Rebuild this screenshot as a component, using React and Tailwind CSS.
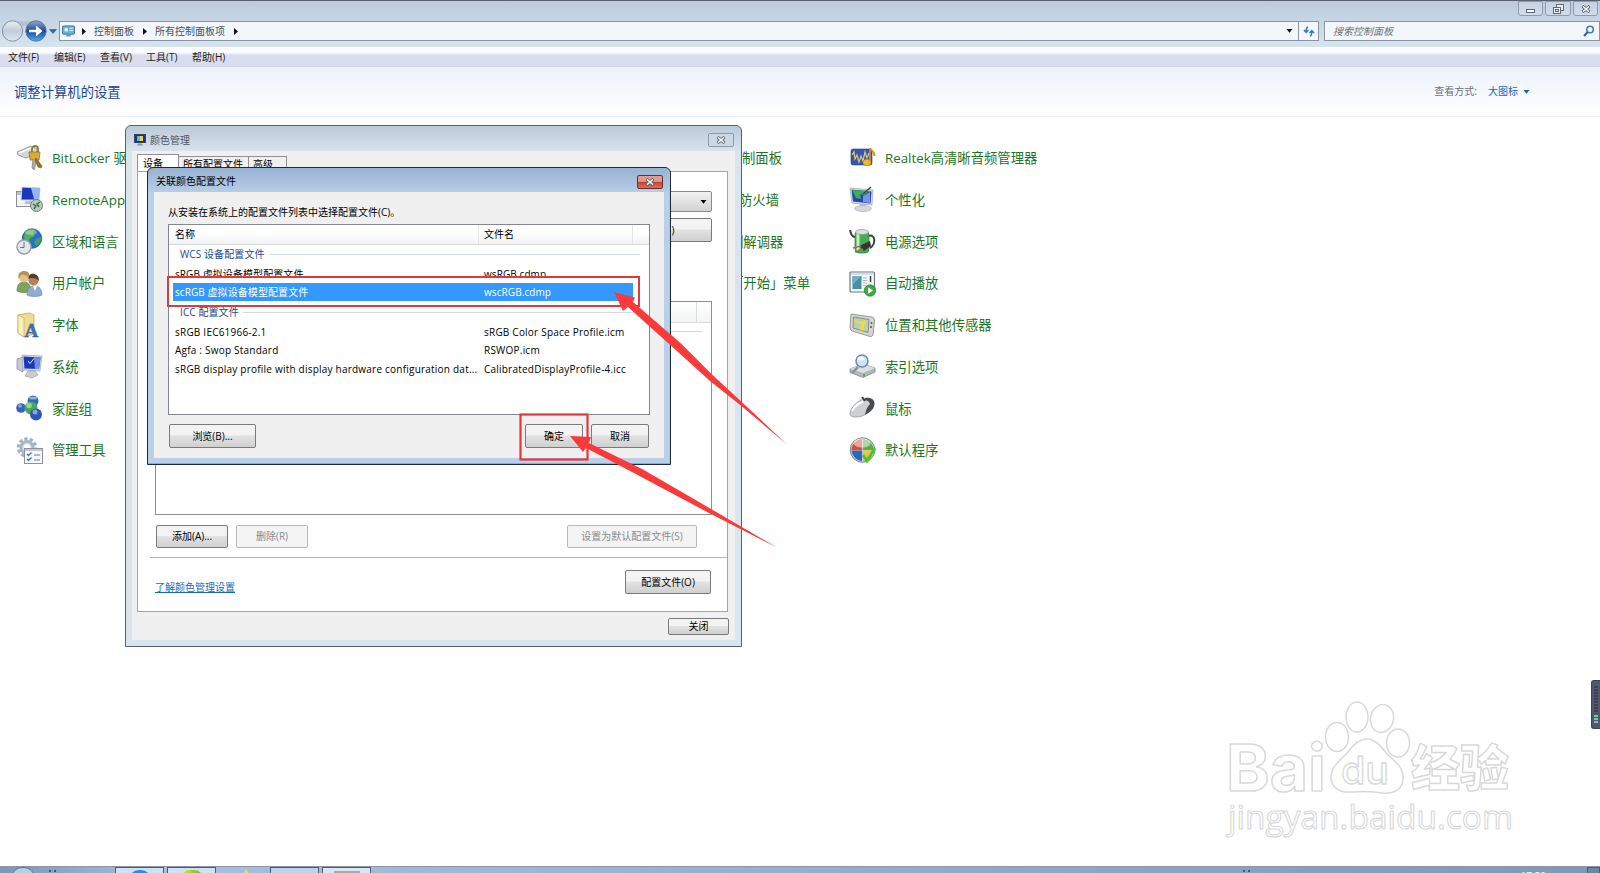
const MENUS = ["文件(F)", "编辑(E)", "查看(V)", "工具(T)", "帮助(H)"];

const LEFT_ITEMS = [
  { label: "BitLocker 驱动器加密", icon: BitLockerIcon },
  { label: "RemoteApp 和桌面连接", icon: RemoteIcon },
  { label: "区域和语言", icon: RegionIcon },
  { label: "用户帐户", icon: UsersIcon },
  { label: "字体", icon: FontsIcon },
  { label: "系统", icon: SystemIcon },
  { label: "家庭组", icon: HomegroupIcon },
  { label: "管理工具", icon: ToolsIcon },
];

const MIDDLE_ITEMS = [
  { label: "制面板", pad: "pl-[6px]" },
  { label: "防火墙", pad: "pl-[3px]" },
  { label: "制解调器", pad: "-ml-[6px]" },
  { label: "「开始」菜单", pad: "-ml-[6px]" },
];

const RIGHT_ITEMS = [
  { label: "Realtek高清晰音频管理器", icon: RealtekIcon },
  { label: "个性化", icon: PersonalizeIcon },
  { label: "电源选项", icon: PowerIcon },
  { label: "自动播放", icon: AutoplayIcon },
  { label: "位置和其他传感器", icon: SensorIcon },
  { label: "索引选项", icon: IndexIcon },
  { label: "鼠标", icon: MouseIcon },
  { label: "默认程序", icon: DefaultsIcon },
];

const ICC_ROWS = [
  ["sRGB IEC61966-2.1", "sRGB Color Space Profile.icm"],
  ["Agfa : Swop Standard", "RSWOP.icm"],
  ["sRGB display profile with display hardware configuration dat...", "CalibratedDisplayProfile-4.icc"],
];

function Icon({ children }) {
  return (
    <svg width="27" height="27" viewBox="0 0 27 27" className="shrink-0">
      {children}
    </svg>
  );
}

function BitLockerIcon() {
  return (
    <Icon>
      <path d="M1 8 L15 2 L21 5 L20 10 L10 14 L2 11Z" fill="#d3d6da" stroke="#888c92" strokeWidth=".8" />
      <path d="M3 9 L15 4 L18 6" fill="none" stroke="#fff" strokeWidth="1.4" />
      <path d="M16 9 V5 a3 3 0 0 1 6 0 V9" fill="none" stroke="#8d7a33" strokeWidth="1.8" />
      <path d="M13 8 h11 l-1 8 h-9Z" fill="#d9ab38" stroke="#9a7418" strokeWidth=".8" />
      <path d="M17 15 l-1 9 l2 2 l1 -3 l1 -8" fill="#aeb1b4" stroke="#777" strokeWidth=".7" />
      <path d="M20 14 l6 8 l-1 2 l-3 -1 l-3 -7Z" fill="#96731f" stroke="#6e5414" strokeWidth=".6" />
    </Icon>
  );
}

function RemoteIcon() {
  return (
    <Icon>
      <rect x=".5" y="5.5" width="14" height="15" fill="#f3f4f6" stroke="#8b9097" />
      <path d="M1 6h13v3H1z" fill="#b8c2d2" />
      <path d="M6 1 L24 2 L23 14 L5 14Z" fill="#1b35bd" stroke="#c7d3e8" />
      <path d="M15 2 L24 2 L23 13 L18 13Z" fill="#94b5f0" />
      <path d="M10 15h8l3 3H8z" fill="#bcc3cc" />
      <circle cx="20.500" cy="19.500" r="6" fill="#bdc5bf" stroke="#79817c" />
      <path d="M17 18l3 2-2 3M24 16l-3 2 2 3" fill="none" stroke="#2c7a39" strokeWidth="1.4" />
    </Icon>
  );
}

function RegionIcon() {
  return (
    <Icon>
      <circle cx="16" cy="10.500" r="9.800" fill="#2872c4" stroke="#194c8c" strokeWidth=".6" />
      <path d="M9 5c3-4 8-5 11-3l-3 3 2 3-5 2-2 5c-3-2-5-6-3-10z" fill="#58b14f" />
      <path d="M20 11l5-2c0 5-2 8-5 9l-2-4z" fill="#46a058" />
      <ellipse cx="15" cy="4.500" rx="6" ry="2.500" fill="#fff" opacity=".35" />
      <circle cx="8" cy="19" r="7" fill="#e4e8ec" stroke="#9aa2ac" strokeWidth="1.500" />
      <path d="M8 14v5.500H4" fill="none" stroke="#6b7480" />
    </Icon>
  );
}

function UsersIcon() {
  return (
    <Icon>
      <path d="M1 21c0-7 3-9 7-9s7 3 7 9c-4 2-10 2-14 0z" fill="#7ba65a" stroke="#557f3b" strokeWidth=".6" />
      <circle cx="8" cy="7.500" r="5" fill="#e3c18f" />
      <path d="M2.500 9c-1-6 2-8 6-8s6 3 4.500 7c-2-3-6-4-8-3z" fill="#b99352" />
      <path d="M11 25c0-7 3-9 7.500-9s7.500 3 7.500 9c-4 2-11 2-15 0z" fill="#8fadd2" stroke="#6683ab" strokeWidth=".6" />
      <path d="M17 16h4l-2 5z" fill="#fff" />
      <circle cx="17.500" cy="10.500" r="5" fill="#b97f57" />
      <path d="M12.500 9c0-5 3-6 6-5s5 3 4 7c-1-3-7-4-10-2z" fill="#523c2c" />
    </Icon>
  );
}

function FontsIcon() {
  return (
    <Icon>
      <path d="M2 3 L13 1 L18 3 V22 L8 25 L2 21Z" fill="#efdc8f" stroke="#c4a74b" strokeWidth=".8" />
      <path d="M2 3 L8 6 V25 L2 21Z" fill="#f8efbd" stroke="#c4a74b" strokeWidth=".6" />
      <text x="8.500" y="25" fontSize="19" className="font-['Liberation_Serif',serif] font-bold" fill="#3f70bd" stroke="#27508f" strokeWidth=".4">A</text>
    </Icon>
  );
}

function SystemIcon() {
  return (
    <Icon>
      <path d="M1 6l6-2v15l-6-3z" fill="#c6cad0" stroke="#858b95" strokeWidth=".7" />
      <path d="M6 2 L26 3 L24 18 L7 17Z" fill="#d2d8e2" stroke="#9aa3b2" strokeWidth=".7" />
      <path d="M7.500 3.500 L24.500 4.500 L23 16 L8.500 15.500Z" fill="#1c38b8" />
      <path d="M18 4 L24.500 4.500 L23 16 L19 16Z" fill="#6d8fe0" />
      <path d="M12 8l2 2.500 4-5" fill="none" stroke="#d7e4fb" strokeWidth="1" />
      <path d="M12 18h7l3 4-6 3-7-2z" fill="#c8cdd4" stroke="#9299a3" strokeWidth=".6" />
    </Icon>
  );
}

function HomegroupIcon() {
  return (
    <Icon>
      <circle cx="5" cy="13" r="4.800" fill="#3763bd" />
      <circle cx="17" cy="6" r="5.500" fill="#3465b8" />
      <circle cx="15" cy="13" r="6.500" fill="#49a856" />
      <circle cx="20" cy="19.500" r="6" fill="#3156b1" />
      <circle cx="13" cy="10.500" r="2.800" fill="#b9e5b2" opacity=".7" />
      <circle cx="19" cy="17" r="2.500" fill="#b3c7f0" opacity=".7" />
      <circle cx="4" cy="11" r="1.800" fill="#b3c7f0" opacity=".7" />
      <ellipse cx="17" cy="3" rx="4" ry="1.500" fill="#b3d3f0" opacity=".7" />
    </Icon>
  );
}

function ToolsIcon() {
  return (
    <Icon>
      <circle cx="11" cy="10.500" r="8.500" fill="none" stroke="#a7b2c1" strokeWidth="3.500" strokeDasharray="3.300 2" />
      <circle cx="11" cy="10.500" r="6" fill="#e3e8ef" stroke="#aab5c4" strokeWidth="3" />
      <circle cx="11" cy="10.500" r="3" fill="#fff" />
      <rect x="8.500" y="11.500" width="18" height="15" fill="#f5f7fa" stroke="#8b929b" />
      <path d="M9 12h17v2H9z" fill="#bec7d3" />
      <path d="M11 17l1.500 1.500 3-3M11 22l1.500 1.500 3-3" fill="none" stroke="#2a8aa3" strokeWidth="1.300" />
      <path d="M18 18h6M18 23h6" stroke="#737b86" />
    </Icon>
  );
}

function RealtekIcon() {
  return (
    <Icon>
      <rect x="2" y="5" width="21" height="16" rx="2" fill="#3554b5" stroke="#26408c" strokeWidth=".6" />
      <path d="M3 11l2-3 1 7 2-4 2 7 2-6 2 5 2-9 2 6 2-5" fill="none" stroke="#e0cc64" strokeWidth="1.200" />
      <path d="M21 18V4c1 3 5 3 4.500 8" fill="none" stroke="#c98f20" strokeWidth="1.800" />
      <ellipse cx="18" cy="18.500" rx="4" ry="3.200" fill="#f2b72c" stroke="#b87c12" strokeWidth=".7" />
    </Icon>
  );
}

function PersonalizeIcon() {
  return (
    <Icon>
      <path d="M1 2 L24 4 L23 19 L3 17Z" fill="#d8dde5" stroke="#98a1ae" strokeWidth=".7" />
      <path d="M2.500 3.500 L22.500 5.500 L21.500 17.500 L4 15.500Z" fill="#2643bd" />
      <path d="M3 4 L20 5 L15 9 L11 8 L12 13 L7 12Z" fill="#41b045" />
      <path d="M14 10 L21 6 V17 L14 16Z" fill="#7994df" />
      <path d="M14 8 L22 1" stroke="#2f4d2c" strokeWidth="1.500" />
      <path d="M11 18h5l1 3h-7z" fill="#b5bbc4" />
      <ellipse cx="14" cy="22.500" rx="8.500" ry="3" fill="#d3d7dc" stroke="#a2a7af" strokeWidth=".6" />
    </Icon>
  );
}

function PowerIcon() {
  return (
    <Icon>
      <path d="M1 2c1 5 3 7 5 7M19 8c8-3 8 9 2 12" fill="none" stroke="#39423d" strokeWidth="2" />
      <rect x="6" y="3" width="14" height="22" rx="4" fill="#46ac54" stroke="#2c7639" strokeWidth=".7" />
      <path d="M9 5v18" stroke="#c5efc1" strokeWidth="3" />
      <ellipse cx="13" cy="4" rx="6.500" ry="2.600" fill="#d9dfdb" stroke="#8f9892" strokeWidth=".7" />
      <path d="M10 18l11-5 1 5-7 5z" fill="#3b3531" />
      <path d="M4 20l8-2M6 24l8-3" stroke="#9a7450" strokeWidth="1.800" />
    </Icon>
  );
}

function AutoplayIcon() {
  return (
    <Icon>
      <rect x="1" y="2" width="24.500" height="20" rx="1" fill="#f6f8fa" stroke="#6d7888" strokeWidth="1.200" />
      <path d="M2 3h23v2H2z" fill="#d6dde7" />
      <rect x="3.500" y="6" width="9" height="13" fill="#4590a2" />
      <path d="M3.500 6h9l-9 9z" fill="#6fafc5" />
      <path d="M14 8h4M14 10.500h4M14 13h4M14 15.500h3" stroke="#b0b7c1" />
      <path d="M21.500 6v6" stroke="#39424e" strokeWidth="1.500" />
      <circle cx="21" cy="20.500" r="5.700" fill="#3ca93c" stroke="#267d27" strokeWidth=".7" />
      <path d="M19.200 17.300 L24 20.500 L19.200 23.700Z" fill="#fff" />
    </Icon>
  );
}

function SensorIcon() {
  return (
    <Icon>
      <path d="M2 2 L23 5 Q26 6 25.500 9 L24 23 Q23 25 21 24.500 L3 19 Q1 18 1 15Z" fill="#d3d5d0" stroke="#848681" strokeWidth=".8" />
      <path d="M4.500 5 L20 7.500 L19 20.500 L4 16Z" fill="#b9ceb5" stroke="#767d72" strokeWidth=".8" />
      <path d="M5 8l6 2 6-2-3 11-4-2 3-5-7-1z" fill="#ecdf38" />
      <circle cx="22.500" cy="11" r="1" fill="#555" />
      <circle cx="22" cy="15" r="1" fill="#555" />
    </Icon>
  );
}

function IndexIcon() {
  return (
    <Icon>
      <path d="M1 16 L14 11 L26 15 V19 L14 24.500 L1 19.500Z" fill="#b2b6ba" stroke="#7c8085" strokeWidth=".7" />
      <path d="M1 16 L14 11 L26 15 L14 20Z" fill="#dde0e3" />
      <path d="M15 21v2.500" stroke="#4bae3f" strokeWidth="1.800" />
      <path d="M9 14 L3 20" stroke="#8d9298" strokeWidth="2.500" />
      <circle cx="13" cy="8" r="6" fill="#cde3f8" stroke="#7388a5" strokeWidth="1.500" />
      <ellipse cx="12" cy="5.500" rx="3.500" ry="2" fill="#fff" opacity=".8" />
    </Icon>
  );
}

function MouseIcon() {
  return (
    <Icon>
      <path d="M1 18c1-5 8-14 15-14s9 3 8 7-6 8-11 10c-6 2-13 1-12-3z" fill="#cfd0d2" stroke="#8c8d90" strokeWidth=".7" />
      <path d="M16 3c6-1 10 2 9.500 6-.5 5-4 8-9.500 11 1-5 2-8 5-11-1-3-3-4-6-4z" fill="#4a4b4d" />
      <path d="M3 16c3-5 6-8 11-9" fill="none" stroke="#fff" strokeWidth="2.200" />
      <path d="M13 2l3 4" stroke="#444" strokeWidth="2" />
    </Icon>
  );
}

function DefaultsIcon() {
  return (
    <Icon>
      <circle cx="13.500" cy="13" r="12.300" fill="#c9cdd2" stroke="#7f858d" />
      <path d="M13 13V2a11 11 0 0 0-10.500 11z" fill="#dc4b32" />
      <path d="M14 13V2a11 11 0 0 1 10.500 11z" fill="#5fae45" />
      <path d="M13 13.500V24a11 11 0 0 1-10.500-10.500z" fill="#2f66c0" />
      <path d="M14 13.500V24a11 11 0 0 0 10.500-10.500z" fill="#f1c534" />
      <ellipse cx="13" cy="6" rx="8.500" ry="4.500" fill="#fff" opacity=".5" />
      <path d="M14 18l4 6 8-13" fill="none" stroke="#4cc436" strokeWidth="3" />
    </Icon>
  );
}

function CloseGlyph() {
  return (
    <svg width="10" height="8" viewBox="0 0 10 8">
      <path d="M1.500 1 L8.500 7 M8.500 1 L1.500 7" stroke="#4f5a68" strokeWidth="3" />
      <path d="M2 1.400 L8 6.600 M8 1.400 L2 6.600" stroke="#f7f9fb" strokeWidth="1.400" />
    </svg>
  );
}

function Caret({ className }) {
  return (
    <svg width="7" height="4" viewBox="0 0 7 4" className={className}>
      <path d="M0.500 0 H6.500 L3.500 3.700Z" fill="currentColor" />
    </svg>
  );
}

function Crumb() {
  return (
    <svg width="4" height="7" viewBox="0 0 4 7">
      <path d="M0 0 L4 3.500 L0 7Z" fill="#111" />
    </svg>
  );
}

function Button({ children, className = "", disabled }) {
  const look = disabled
    ? "border-[#b9b9b9] bg-[#f4f4f4] text-[#8b8b8b]"
    : "border-[#7a7a7a] bg-linear-to-b from-[#f3f3f3] from-45% via-[#e2e2e2] via-50% to-[#d0d0d0] text-black";
  return (
    <button className={`flex shrink-0 items-center justify-center rounded-[2px] border text-[10px] ${look} ${className}`}>
      {children}
    </button>
  );
}

function ControlButton({ children, className = "" }) {
  return (
    <div className={`flex h-[15px] items-center justify-center rounded-b-[3px] border border-[#8e9bac] bg-linear-to-b from-[#c6d2e1] to-[#d0dcea] ${className}`}>
      {children}
    </div>
  );
}

function TitleBar() {
  return (
    <div className="h-[47px] border-t border-[#59616d] bg-linear-to-b from-[#bccadb] to-[#d7e4f0]">
      <div className="flex h-[20px] justify-end gap-[2px] pr-[2px]">
        <ControlButton className="w-[25px]">
          <div className="mt-1 h-[4px] w-[9px] border border-[#5e6875] bg-white" />
        </ControlButton>
        <ControlButton className="w-[26px]">
          <svg width="11" height="10" viewBox="0 0 11 10" fill="#edf1f6" stroke="#5e6875">
            <rect x="3.500" y=".5" width="7" height="6" />
            <rect x=".5" y="3.500" width="7" height="6" />
            <rect x="2.500" y="5.500" width="3" height="2" />
          </svg>
        </ControlButton>
        <ControlButton className="w-[25px]">
          <CloseGlyph />
        </ControlButton>
      </div>
      <div className="flex h-[20px] items-center">
        <svg width="59" height="22" viewBox="0 0 59 22" className="shrink-0">
          <defs>
            <linearGradient id="fwd" x1="0" y1="0" x2="0" y2="1">
              <stop offset="0" stopColor="#8fa9d3" />
              <stop offset=".5" stopColor="#1d479b" />
              <stop offset="1" stopColor="#41b4ee" />
            </linearGradient>
            <linearGradient id="back" x1="0" y1="0" x2="0" y2="1">
              <stop offset="0" stopColor="#e9eef4" />
              <stop offset=".5" stopColor="#c2cddb" />
              <stop offset="1" stopColor="#dfe7ef" />
            </linearGradient>
          </defs>
          <path d="M12 1 H38 L30 6 H18Z" fill="#b7c3d2" />
          <circle cx="12.500" cy="11" r="10.200" fill="url(#back)" stroke="#8693a3" />
          <circle cx="36" cy="11" r="10.200" fill="url(#fwd)" stroke="#5c7396" />
          <path d="M29 9.700h7V5.500l6.500 5.500-6.500 5.500v-4.200h-7z" fill="#fff" />
          <path d="M49.500 9.500h7L53 13.500z" fill="#2b6e9d" stroke="#194f78" strokeWidth=".5" />
        </svg>
        <div className="flex h-[20px] w-[1260px] items-center border border-[#8795a5] bg-[#f3f7fb] pl-[2px] text-[10px] text-[#45505c]">
          <svg width="13" height="13" viewBox="0 0 14 13">
            <rect x=".5" y=".5" width="13" height="9" rx="1" fill="#65b1da" stroke="#3878a2" />
            <circle cx="4.500" cy="4.500" r="2" fill="#e6f4fb" />
            <path d="M8 3h4M8 5.500h4" stroke="#e6f4fb" />
            <path d="M4 12h6l-1-2H5z" fill="#7894a8" />
          </svg>
          <span className="ml-[7px]"><Crumb /></span>
          <span className="ml-2">控制面板</span>
          <span className="ml-[9px]"><Crumb /></span>
          <span className="ml-2">所有控制面板项</span>
          <span className="ml-[9px]"><Crumb /></span>
          <Caret className="mr-[5px] ml-auto text-[#111]" />
          <div className="flex h-full w-[20px] items-center justify-center border-l border-[#8795a5]">
            <svg width="12" height="11" viewBox="0 0 12 11" fill="none" stroke="#2e7db5" strokeWidth="1.500">
              <path d="M5 1 Q3 1.500 3.200 6 M1 4l2.200 2.500L5.500 4" />
              <path d="M7 10 Q9 9.500 8.800 5 M6.500 7l2.300-2.500L11 7" />
            </svg>
          </div>
        </div>
        <div className="ml-[5px] flex h-[20px] flex-1 items-center justify-between border border-[#8795a5] bg-[#f3f7fb] pr-[4px] pl-[8px] text-[10px] text-[#6e7680] italic">
          搜索控制面板
          <svg width="12" height="12" viewBox="0 0 12 12" fill="none" stroke="#3a7fb4" strokeWidth="1.600">
            <circle cx="7" cy="4.500" r="3.300" />
            <path d="M4.700 7 L1 11" strokeWidth="2" stroke="#35618c" />
          </svg>
        </div>
      </div>
    </div>
  );
}

function ItemColumn({ items }) {
  return items.map(({ label, icon: ItemIcon }) => (
    <div key={label} className="flex h-[41.8px] items-center gap-[9px] whitespace-nowrap">
      <ItemIcon />
      <span className="pt-[2px]">{label}</span>
    </div>
  ));
}

function ControlPanel() {
  return (
    <div className="h-[866px] bg-white">
      <TitleBar />
      <div className="flex h-[20px] items-center gap-[14px] border-y border-t-white border-b-[#ced1e2] bg-linear-to-b from-[#fafbfe] from-25% to-[#d9ddee] to-40% pl-[8px] text-[10px] text-[#1c1c1c]">
        {MENUS.map((m) => (
          <span key={m} className="w-[32px] whitespace-nowrap">{m}</span>
        ))}
      </div>
      <div className="flex h-[50px] items-center border-b border-[#e9ecf0] bg-linear-to-b from-[#edf1fb] to-white pr-[70px] pl-[14px]">
        <h1 className="pt-[2px] text-[13.330px] text-[#1e4690]">调整计算机的设置</h1>
        <span className="ml-auto text-[10px] text-[#68717b]">查看方式:</span>
        <span className="ml-[11px] text-[10px] text-[#1c66b0]">大图标</span>
        <Caret className="ml-[5px] text-[#1c66b0]" />
      </div>
      <div className="flex pt-[20px] text-[13.330px] text-[#1c7526]">
        <div className="w-[736px] pl-[16px]">
          <ItemColumn items={LEFT_ITEMS} />
        </div>
        <div className="w-[113px]">
          {MIDDLE_ITEMS.map(({ label, pad }) => (
            <div key={label} className={`flex h-[41.8px] items-center pt-[2px] whitespace-nowrap ${pad}`}>
              {label}
            </div>
          ))}
        </div>
        <div>
          <ItemColumn items={RIGHT_ITEMS} />
        </div>
      </div>
    </div>
  );
}

function ColorManagementDialog() {
  return (
    <div className="absolute top-[125px] left-[125px] flex h-[522px] w-[617px] flex-col rounded-t-[6px] border border-[#566270] bg-linear-to-b from-[#bccad8] to-[#d8e4ee] to-[26px] px-[6px] pb-[6px]">
      <div className="flex h-[25px] shrink-0 items-center pt-[3px] pl-[2px] text-[10px] text-[#4c5560]">
        <svg width="12" height="12" viewBox="0 0 12 12">
          <rect x=".5" y=".5" width="11" height="8" fill="#1b2aa5" stroke="#3c4258" />
          <path d="M3 2h3v5H3z" fill="#4dc8d8" />
          <path d="M6 2h3v5H6z" fill="#e9d74b" />
          <path d="M3 11.500h6l-1-2H4z" fill="#8d94a0" />
        </svg>
        <span className="ml-[4px]">颜色管理</span>
        <div className="mr-[1px] ml-auto flex h-[14px] w-[26px] items-center justify-center rounded-[2px] border border-[#8e9bac] bg-[#cbd8e6]">
          <CloseGlyph />
        </div>
      </div>
      <div className="flex min-h-0 flex-1 flex-col bg-[#f0f0f0] px-[5px] pt-[3px] pb-[4px] text-[10px]">
        <div className="flex h-[17px] shrink-0 items-end">
          <div className="-mb-px h-[18px] w-[42px] border border-b-0 border-[#919191] bg-white pl-[5px] leading-[16px]">设备</div>
          <div className="h-[15px] w-[70px] border border-b-0 border-l-0 border-[#919191] pl-[4px] leading-[15px] whitespace-nowrap">所有配置文件</div>
          <div className="h-[15px] w-[38px] border border-b-0 border-l-0 border-[#919191] pl-[4px] leading-[15px]">高级</div>
        </div>
        <div className="mr-[2px] flex h-[441px] shrink-0 flex-col border border-[#a5a5a5] bg-white pl-[12px]">
          <div className="flex flex-col items-end gap-[6px] pt-[19px] pr-[15px]">
            <div className="flex h-[21px] w-[320px] items-center justify-end rounded-[2px] border border-[#8a8a8a] bg-linear-to-b from-[#f1f1f1] to-[#d3d3d3] pr-[4px]">
              <Caret />
            </div>
            <Button className="h-[24px] w-[134px]">识别监视器(I)</Button>
          </div>
          <div className="mt-[59px] ml-[5px] h-[214px] w-[557px] shrink-0 border border-[#8b9097]">
            <div className="flex h-[21px] border-b border-[#dcdcdc] bg-linear-to-b from-white to-[#f3f4f5]">
              <div className="w-[541px] border-r border-[#dcdcdc]" />
            </div>
            <div className="mt-[8px] mr-[9px] border-t border-[#d3d8df]" />
          </div>
          <div className="mt-[10px] flex pr-[30px] pl-[6px]">
            <Button className="h-[23px] w-[72px]">添加(A)...</Button>
            <Button disabled className="ml-[8px] h-[23px] w-[72px]">删除(R)</Button>
            <Button disabled className="ml-auto h-[23px] w-[130px]">设置为默认配置文件(S)</Button>
          </div>
          <div className="mt-[9px] border-t border-[#b4b4b4]" />
          <div className="flex items-start pt-[12px] pr-[16px] pl-[5px]">
            <a className="mt-[10px] text-[#1668b8] underline">了解颜色管理设置</a>
            <Button className="ml-auto h-[24px] w-[86px]">配置文件(O)</Button>
          </div>
        </div>
        <Button className="mt-[6px] mr-[1px] h-[17px] w-[61px] self-end">关闭</Button>
      </div>
    </div>
  );
}

function GroupHeader({ children, className = "" }) {
  return (
    <div className={`flex items-center gap-[4px] pr-[9px] pl-[11px] whitespace-nowrap text-[#23488f] ${className}`}>
      <span className="tracking-[0.1px]">{children}</span>
      <div className="h-px flex-1 bg-[#d3dbe6]" />
    </div>
  );
}

function ProfileRow({ name, file, className = "" }) {
  return (
    <div className={`flex items-center whitespace-nowrap ${className}`}>
      <span className="w-[309px]">{name}</span>
      <span>{file}</span>
    </div>
  );
}

function AssociateDialog() {
  return (
    <div className="absolute top-[167px] left-[147px] flex h-[298px] w-[524px] flex-col rounded-t-[6px] border border-[#1f2a35] bg-linear-to-b from-[#98b2d2] to-[#b9d0ea] to-[26px] px-[6px] pb-[6px] shadow-[inset_0_-1px_0_#55c3e6,inset_-1px_0_0_#8fd3ee]">
      <div className="flex h-[24px] shrink-0 items-center justify-between pt-[3px] pl-[2px] text-[10px] text-black">
        关联颜色配置文件
        <div className="mt-[1px] mr-[1px] flex h-[14px] w-[26px] items-center justify-center rounded-[2px] border border-[#6c2f2f] bg-linear-to-b from-[#e39a8c] from-45% via-[#c4402c] via-50% to-[#d8705a]">
          <CloseGlyph />
        </div>
      </div>
      <div className="flex flex-1 flex-col bg-[#f0f0f0] pt-[12px] pr-[15px] pl-[14px] text-[10px]">
        <p className="leading-[16px]">从安装在系统上的配置文件列表中选择配置文件(C)。</p>
        <div className="mt-[4px] h-[191px] w-[482px] border border-[#828790] bg-white">
          <div className="flex h-[20px] items-center border-b border-[#d9d9d9] bg-linear-to-b from-white from-40% to-[#f2f3f4] pl-[6px]">
            <span className="w-[303px]">名称</span>
            <span className="flex h-full w-[155px] items-center border-x border-[#e5e5e5] pl-[5px]">文件名</span>
          </div>
          <GroupHeader className="h-[19px]">WCS 设备配置文件</GroupHeader>
          <ProfileRow className="h-[20px] pl-[6px] tracking-[0.08px]" name="sRGB 虚拟设备模型配置文件" file="wsRGB.cdmp" />
          <div className="relative -mt-[8px] -mb-[5px] -ml-[2px] h-[31px] w-[473px] border-[2px] border-[#e0393b] bg-white py-[5px] pr-[5px] pl-[4px]">
            <ProfileRow className="h-[18px] bg-[#3399ff] pl-[2px] tracking-[0.08px] text-white" name="scRGB 虚拟设备模型配置文件" file="wscRGB.cdmp" />
          </div>
          <GroupHeader className="h-[21px]">ICC 配置文件</GroupHeader>
          {ICC_ROWS.map(([name, file]) => (
            <ProfileRow key={name} className="h-[18.500px] pl-[6px] tracking-[0.22px]" name={name} file={file} />
          ))}
        </div>
        <div className="mt-[9px] flex pl-[1px]">
          <Button className="h-[24px] w-[87px]">浏览(B)...</Button>
          <Button className="ml-auto h-[24px] w-[58px]">确定</Button>
          <Button className="ml-[8px] h-[24px] w-[58px]">取消</Button>
        </div>
      </div>
    </div>
  );
}

function Annotations() {
  return (
    <svg width="1600" height="873" viewBox="0 0 1600 873" className="pointer-events-none absolute inset-0">
      <rect x="520.500" y="414.500" width="67" height="45" fill="none" stroke="#e0393b" strokeWidth="2.200" />
      <path d="M614 292 L635 297.500 L633 302 L681 343.500 L712 374.500 L745 405 L787 444.500 L742 406.500 L710 381 L678 352 L628 307 L623 311Z" fill="#f93a3a" />
      <path d="M570 436 L591 437 L589 443 L643 469.500 L712 509.500 L777 547.500 L708 512.500 L632 472 L586 448 L583 452Z" fill="#f93a3a" />
    </svg>
  );
}

function Watermark() {
  return (
    <svg
      width="300"
      height="150"
      viewBox="0 0 300 150"
      className="absolute top-[695px] left-[1220px]"
      fill="#fff"
      stroke="#d9d9d9"
      strokeWidth="1.500"
      strokeLinejoin="round"
    >
      <text x="6" y="96" fontSize="65" textLength="100" lengthAdjust="spacingAndGlyphs" className="font-['Inter',sans-serif] font-bold">Bai</text>
      <ellipse cx="117" cy="42" rx="11.500" ry="14.500" />
      <ellipse cx="137" cy="22" rx="11" ry="15" />
      <ellipse cx="162" cy="23.500" rx="11.500" ry="14" transform="rotate(12 162 23.500)" />
      <ellipse cx="178" cy="48" rx="11.500" ry="14" />
      <path d="M147 44 C156 44 162 53 168 60 C176 67 184 73 183 85 C182 95 173 99 163 98 C152 96 142 96 131 97 C119 98 111 92 111 82 C111 71 121 65 127 58 C132 51 138 44 147 44Z" />
      <text x="121" y="89" fontSize="38" textLength="48" lengthAdjust="spacingAndGlyphs" className="font-['Inter',sans-serif] font-medium" strokeWidth="1.300">du</text>
      <text x="191" y="91" fontSize="49" textLength="98" className="font-['Noto_Sans_CJK_SC',sans-serif] font-black">经验</text>
      <text x="8" y="134" fontSize="33" textLength="285" lengthAdjust="spacingAndGlyphs" className="font-['Open_Sans',sans-serif] font-medium" strokeWidth="1.100">jingyan.baidu.com</text>
    </svg>
  );
}

function Taskbar() {
  return (
    <div className="flex h-[7px] items-start overflow-hidden border-t border-[#8a97a8] bg-linear-to-r from-[#7f95b0] via-[#a9bfda] via-10% to-[#8198b5]">
      <div className="ml-[11px] h-[22px] w-[24px] shrink-0 rounded-full border border-[#5c7690] bg-[#bccfe2]" />
      <div className="mt-[3px] ml-[14px] w-[7px] shrink-0 border-t-2 border-dotted border-[#45566a]" />
      <div className="ml-[59px] flex h-[20px] w-[49px] shrink-0 justify-center border border-[#4d5c6e] bg-[#d4e0ed] pt-[2px]">
        <div className="h-[20px] w-[22px] rounded-full bg-[#2e8bdc]" />
      </div>
      <div className="ml-[3px] flex h-[20px] w-[49px] shrink-0 justify-center border border-[#4d5c6e] bg-[#d4e0ed] pt-[2px]">
        <div className="h-[20px] w-[24px] rounded-full bg-linear-to-r from-[#eedf35] to-[#52b53d]" />
      </div>
      <svg width="12" height="7" viewBox="0 0 12 7" className="ml-[24px] shrink-0">
        <path d="M6 2 L9 7 H3Z" fill="#ecdc5e" />
      </svg>
      <div className="ml-[18px] h-[20px] w-[49px] shrink-0 border border-[#4d5c6e] bg-[#c1d2e5]" />
      <div className="ml-[3px] flex h-[20px] w-[49px] shrink-0 justify-center border border-[#4d5c6e] bg-[#dde5ee] pt-[3px]">
        <div className="h-[20px] w-[26px] bg-[#a8aaa9]" />
      </div>
      <div className="mt-[3px] ml-auto w-[7px] shrink-0 border-t-2 border-dotted border-[#45566a]" />
      <span className="mt-[3px] ml-[271px] text-[10px] leading-[12px] text-white">17:50</span>
      <div className="ml-[41px] h-[20px] w-[13px] shrink-0 border border-[#4d5c6e] bg-[#74859b]" />
    </div>
  );
}

function MeterWidget() {
  return (
    <div className="absolute top-[680px] right-0 flex h-[49px] w-[9px] flex-col justify-between rounded-l-[3px] border border-r-0 border-[#3f4357] bg-[#53566c] px-[2px] py-[5px]">
      <div className="flex flex-col gap-px">
        {Array.from({ length: 9 }, (_, i) => (
          <div key={i} className="h-[2px] w-[4px] bg-[#3e4154]" />
        ))}
      </div>
      <div className="flex flex-col gap-px">
        <div className="h-[2px] w-[4px] bg-[#5fd6a0]" />
        <div className="h-[2px] w-[4px] bg-[#5fd6a0]" />
        <div className="h-[2px] w-[4px] bg-[#5fc6d6]" />
      </div>
    </div>
  );
}

function App() {
  return (
    <div className="relative h-[873px] w-[1600px] overflow-hidden bg-white font-['Open_Sans','Noto_Sans_CJK_SC',sans-serif]">
      <ControlPanel />
      <Taskbar />
      <ColorManagementDialog />
      <AssociateDialog />
      <Annotations />
      <Watermark />
      <MeterWidget />
    </div>
  );
}

export default App;
